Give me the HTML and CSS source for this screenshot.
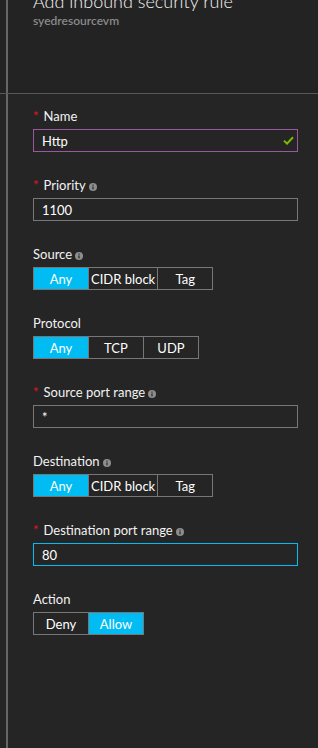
FILE: index.html
```html
<!DOCTYPE html>
<html lang="en">
<head>
  <meta charset="UTF-8" />
  <meta name="viewport" content="width=device-width, initial-scale=1.0"/>
  <title>Add inbound security rule</title>
  <link rel="stylesheet" href="styles.css">
</head>
<body>
  <div class="blade-header">
    <div class="blade-title">
      <h1>Add inbound security rule</h1>
      <p class="subtitle">syedresourcevm</p>
    </div>
  </div>

  <div class="blade-content">
    <form class="rule-form">
      <div class="field">
        <label class="field-label"><span class="req">*</span>Name</label>
        <div class="textbox valid">
          <input type="text" value="Http" />
          <svg class="check" width="11" height="9" viewBox="0 0 11 9">
            <path d="M1 4.6 L4 7.6 L10 1.2" fill="none" stroke="#7fba00" stroke-width="2"/>
          </svg>
        </div>
      </div>

      <div class="field">
        <label class="field-label"><span class="req">*</span>Priority<svg class="info" width="8" height="8" viewBox="0 0 8 8"><circle cx="4" cy="4" r="4" fill="#8d8d8d"/><rect x="3.4" y="3.5" width="1.2" height="2.8" fill="#252525"/><rect x="3.4" y="1.6" width="1.2" height="1.1" fill="#252525"/></svg></label>
        <div class="textbox">
          <input type="text" value="1100" />
        </div>
      </div>

      <div class="field">
        <label class="field-label">Source<svg class="info" width="8" height="8" viewBox="0 0 8 8"><circle cx="4" cy="4" r="4" fill="#8d8d8d"/><rect x="3.4" y="3.5" width="1.2" height="2.8" fill="#252525"/><rect x="3.4" y="1.6" width="1.2" height="1.1" fill="#252525"/></svg></label>
        <div class="toggle-group">
          <button type="button" class="toggle selected">Any</button>
          <button type="button" class="toggle">CIDR block</button>
          <button type="button" class="toggle">Tag</button>
        </div>
      </div>

      <div class="field">
        <label class="field-label">Protocol</label>
        <div class="toggle-group">
          <button type="button" class="toggle selected">Any</button>
          <button type="button" class="toggle">TCP</button>
          <button type="button" class="toggle">UDP</button>
        </div>
      </div>

      <div class="field">
        <label class="field-label"><span class="req">*</span>Source port range<svg class="info" width="8" height="8" viewBox="0 0 8 8"><circle cx="4" cy="4" r="4" fill="#8d8d8d"/><rect x="3.4" y="3.5" width="1.2" height="2.8" fill="#252525"/><rect x="3.4" y="1.6" width="1.2" height="1.1" fill="#252525"/></svg></label>
        <div class="textbox">
          <input type="text" value="*" />
        </div>
      </div>

      <div class="field">
        <label class="field-label">Destination<svg class="info" width="8" height="8" viewBox="0 0 8 8"><circle cx="4" cy="4" r="4" fill="#8d8d8d"/><rect x="3.4" y="3.5" width="1.2" height="2.8" fill="#252525"/><rect x="3.4" y="1.6" width="1.2" height="1.1" fill="#252525"/></svg></label>
        <div class="toggle-group">
          <button type="button" class="toggle selected">Any</button>
          <button type="button" class="toggle">CIDR block</button>
          <button type="button" class="toggle">Tag</button>
        </div>
      </div>

      <div class="field">
        <label class="field-label"><span class="req">*</span>Destination port range<svg class="info" width="8" height="8" viewBox="0 0 8 8"><circle cx="4" cy="4" r="4" fill="#8d8d8d"/><rect x="3.4" y="3.5" width="1.2" height="2.8" fill="#252525"/><rect x="3.4" y="1.6" width="1.2" height="1.1" fill="#252525"/></svg></label>
        <div class="textbox focused">
          <input type="text" value="80" />
        </div>
      </div>

      <div class="field">
        <label class="field-label">Action</label>
        <div class="toggle-group">
          <button type="button" class="toggle">Deny</button>
          <button type="button" class="toggle selected">Allow</button>
        </div>
      </div>
    </form>
  </div>
</body>
</html>
```

FILE: styles.css
```css
* {
  box-sizing: border-box;
}

body {
  margin: 0;
  font-family: 'Lato', 'Open Sans', sans-serif;
  font-size: 13px;
  background-color: #252525;
  color: #f2f2f2;
}

/* header strip, title is scrolled partly out of view */
.blade-header {
  height: 94px;
  border-bottom: 1px solid #575757;
  background-color: #232323;
}

.blade-title {
  height: 93px;
  margin-left: 6px;
  padding-left: 25px;
  border-left: 2px solid #666;
  overflow: hidden;
}

h1 {
  margin: -9px 0 0;
  font-size: 18px;
  font-weight: 300;
  line-height: 20px;
  color: #f4f4f4;
}

.subtitle {
  margin: 4px 0 0;
  font-size: 12px;
  font-weight: 600;
  line-height: 12px;
  color: #8a8a8a;
}

.blade-content {
  min-height: calc(100vh - 94px);
  margin-left: 6px;
  padding: 14px 20px 0 25px;
  border-left: 2px solid #666;
}

.field {
  margin-bottom: 25px;
}

.field-label {
  display: block;
  line-height: 16px;
  margin-bottom: 5px;
}

.req {
  color: #e81123;
  margin-right: 5px;
}

.info {
  margin-left: 3px;
  vertical-align: -1px;
}

.textbox {
  display: flex;
  align-items: center;
  height: 23px;
  border: 1px solid #777;
}

.textbox input {
  flex: 1;
  min-width: 0;
  height: 100%;
  padding: 0 8px;
  border: none;
  outline: none;
  background: transparent;
  color: #fff;
  font: inherit;
}

.textbox.valid {
  border-color: #99589f;
}

.textbox.focused {
  border-color: #00bcf2;
}

.check {
  margin-right: 3px;
}

.toggle-group {
  display: flex;
}

.toggle {
  height: 23px;
  min-width: 55px;
  padding: 0 2px;
  border: 1px solid #777;
  border-left: none;
  background: transparent;
  color: #fff;
  font: inherit;
  white-space: nowrap;
  cursor: pointer;
}

.toggle:first-child {
  min-width: 56px;
  border-left: 1px solid #777;
}

.toggle.selected {
  background-color: #00bcf2;
}
```
